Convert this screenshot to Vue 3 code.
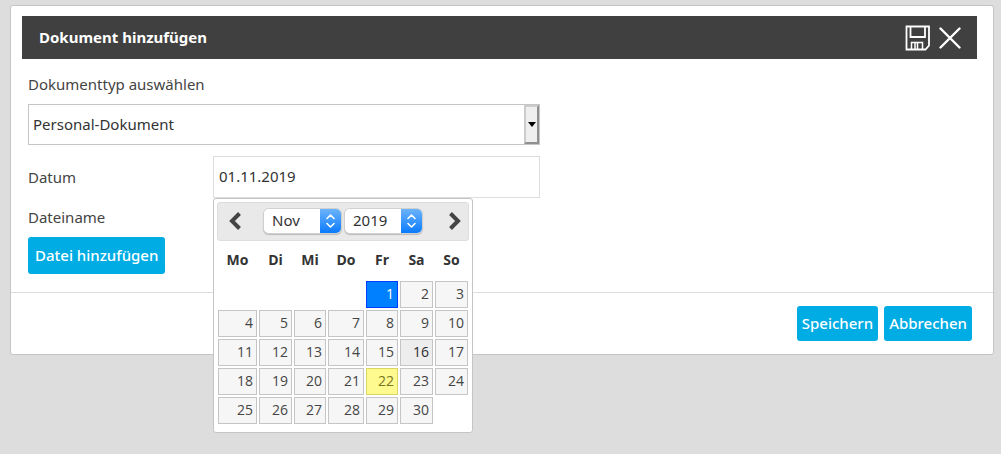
<template>
  <div class="page">
    <div class="panel">
      <header class="panel-head">
        <h1>Dokument hinzufügen</h1>
        <div class="head-actions">
          <button type="button" class="icon-btn" aria-label="Speichern">
            <svg width="26" height="26" viewBox="0 0 26 26" fill="none" stroke="#fff">
              <path d="M1.5 1.5H24V20.5L20.5 24.5H1.5Z" stroke-width="1.8" />
              <path d="M5.5 1.5V12H20V1.5" stroke-width="1.8" />
              <path d="M6.5 24.5V17.5H17.5V24.5M10 17.5V24.5M12.5 17.5V24.5" stroke-width="1.5" />
            </svg>
          </button>
          <button type="button" class="icon-btn" aria-label="Schließen">
            <svg width="22" height="22" viewBox="0 0 22 22" fill="none" stroke="#fff" stroke-width="2.4" stroke-linecap="round">
              <path d="M1.5 1.5L20.5 20.5M20.5 1.5L1.5 20.5" />
            </svg>
          </button>
        </div>
      </header>

      <form class="form" @submit.prevent>
        <label class="label-top" for="doctype">Dokumenttyp auswählen</label>
        <div class="type-select">
          <select id="doctype" v-model="docType">
            <option>Personal-Dokument</option>
          </select>
          <span class="type-arrow"><i></i></span>
        </div>

        <div class="row">
          <label for="date">Datum</label>
          <div class="date-field">
            <input id="date" v-model="date" type="text" />

            <div class="calendar">
              <div class="cal-head">
                <button type="button" class="nav-btn" aria-label="Zurück">
                  <svg width="12" height="18" viewBox="0 0 12 18" fill="none" stroke="#444" stroke-width="4">
                    <path d="M10.5 1.5L3 9L10.5 16.5" />
                  </svg>
                </button>
                <div class="cal-selects">
                  <div class="mac-select">
                    <select v-model="month" aria-label="Monat">
                      <option v-for="m in months" :key="m">{{ m }}</option>
                    </select>
                    <span class="mac-arrow">
                      <svg width="11" height="16" viewBox="0 0 11 16" fill="none" stroke="#fff" stroke-width="1.6" stroke-linecap="round" stroke-linejoin="round">
                        <path d="M2 5.5L5.5 2L9 5.5M2 10.5L5.5 14L9 10.5" />
                      </svg>
                    </span>
                  </div>
                  <div class="mac-select">
                    <select v-model="year" aria-label="Jahr">
                      <option v-for="y in years" :key="y">{{ y }}</option>
                    </select>
                    <span class="mac-arrow">
                      <svg width="11" height="16" viewBox="0 0 11 16" fill="none" stroke="#fff" stroke-width="1.6" stroke-linecap="round" stroke-linejoin="round">
                        <path d="M2 5.5L5.5 2L9 5.5M2 10.5L5.5 14L9 10.5" />
                      </svg>
                    </span>
                  </div>
                </div>
                <button type="button" class="nav-btn" aria-label="Vor">
                  <svg width="12" height="18" viewBox="0 0 12 18" fill="none" stroke="#444" stroke-width="4">
                    <path d="M1.5 1.5L9 9L1.5 16.5" />
                  </svg>
                </button>
              </div>

              <table>
                <colgroup>
                  <col class="c-mo" /><col class="c-di" /><col class="c-mi" /><col class="c-do" />
                  <col class="c-fr" /><col class="c-sa" /><col class="c-so" />
                </colgroup>
                <thead>
                  <tr>
                    <th v-for="d in weekdays" :key="d" scope="col">{{ d }}</th>
                  </tr>
                </thead>
                <tbody>
                  <tr v-for="(week, i) in weeks" :key="i">
                    <td v-for="(day, j) in week" :key="j">
                      <a
                        v-if="day"
                        href="#"
                        :class="{ selected: day === 1, today: day === 22, hover: day === 16 }"
                        @click.prevent="pick(day)"
                      >{{ day }}</a>
                    </td>
                  </tr>
                </tbody>
              </table>
            </div>
          </div>
        </div>

        <div class="file-label">Dateiname</div>
        <button type="button" class="btn btn-file">Datei hinzufügen</button>
      </form>

      <footer class="panel-foot">
        <button type="button" class="btn">Speichern</button>
        <button type="button" class="btn">Abbrechen</button>
      </footer>
    </div>
  </div>
</template>

<script setup>
import { ref } from 'vue'

const docType = ref('Personal-Dokument')
const date = ref('01.11.2019')
const month = ref('Nov')
const year = ref('2019')

const months = ['Jan', 'Feb', 'Mär', 'Apr', 'Mai', 'Jun', 'Jul', 'Aug', 'Sep', 'Okt', 'Nov', 'Dez']
const years = ['2018', '2019', '2020']
const weekdays = ['Mo', 'Di', 'Mi', 'Do', 'Fr', 'Sa', 'So']

// November 2019 beginnt an einem Freitag
const weeks = Array.from({ length: 5 }, (_, w) =>
  Array.from({ length: 7 }, (_, d) => {
    const day = w * 7 + d - 3
    return day >= 1 && day <= 30 ? day : null
  })
)

const pick = (day) => {
  date.value = `${String(day).padStart(2, '0')}.11.2019`
}
</script>

<style>
body {
  background: #ddd;
}
</style>

<style scoped>
.page {
  min-height: 100vh;
  box-sizing: border-box;
  padding: 5px 7px 20px 10px;
  background: #ddd;
}

.panel {
  background: #fff;
  border: 1px solid #c5c5c5;
  border-radius: 3px;
  font-family: "Noto Sans", "Open Sans", sans-serif;
  font-size: 15px;
  line-height: 20px;
  color: #444;
}

button,
input,
select {
  font: inherit;
  margin: 0;
  box-sizing: border-box;
}

.panel-head {
  display: flex;
  align-items: center;
  justify-content: space-between;
  height: 43px;
  margin: 10px 16px 0 11px;
  padding: 0 16px 0 17px;
  background: #404040;
  color: #fff;
}

.panel-head h1 {
  margin: 0;
  padding-bottom: 2px;
  font-size: 15px;
  font-weight: 700;
}

.head-actions {
  display: flex;
  align-items: center;
  gap: 8px;
}

.icon-btn,
.nav-btn {
  display: flex;
  padding: 0;
  border: 0;
  background: none;
}

.form {
  max-width: 512px;
  padding: 15px 17px 18px;
}

.label-top {
  display: block;
  margin-bottom: 10px;
}

.type-select {
  display: flex;
  height: 41px;
  box-sizing: border-box;
  border: 1px solid #c5c5c5;
}

.type-select select {
  flex: 1;
  padding: 0 4px 2px;
  border: 0;
  appearance: none;
  background: #fff;
  color: #333;
}

.type-arrow {
  display: flex;
  align-items: center;
  justify-content: center;
  width: 15px;
  box-sizing: border-box;
  background: #efefef;
  border: 2px solid;
  border-color: #ccc #909090 #909090 #ccc;
}

.type-arrow i {
  border: 4px solid transparent;
  border-top: 5px solid #000;
  border-bottom: 0;
}

.row {
  display: flex;
  align-items: center;
  margin-top: 11px;
}

.row > label {
  width: 185px;
}

.date-field {
  position: relative;
  flex: 1;
}

.date-field input {
  display: block;
  width: 100%;
  height: 42px;
  padding: 0 5px 2px;
  border: 1px solid #ddd;
  color: #333;
}

.file-label {
  margin: 9px 0 10px;
}

.btn {
  height: 35px;
  padding: 0 5px 2px;
  border: 0;
  border-radius: 3px;
  background: #00ace4;
  color: #fff;
  font-weight: 500;
}

.btn-file {
  display: block;
  height: 37px;
  padding: 0 7px 2px;
}

.panel-foot {
  display: flex;
  justify-content: flex-end;
  gap: 6px;
  padding: 13px 21px 13px 20px;
  border-top: 1px solid #ddd;
}

.calendar {
  position: absolute;
  top: 100%;
  left: 0;
  z-index: 1;
  padding: 3px 3px 7px;
  background: #fff;
  border: 1px solid #c5c5c5;
  border-radius: 3px;
}

.cal-head {
  display: flex;
  align-items: center;
  justify-content: space-between;
  height: 39px;
  box-sizing: border-box;
  padding: 0 7px 2px 11px;
  background: #e9e9e9;
  border: 1px solid #ddd;
  border-radius: 3px;
}

.cal-selects {
  display: flex;
  gap: 4px;
  margin-right: 4px;
}

.mac-select {
  display: flex;
  height: 24px;
  box-sizing: border-box;
  border-radius: 5px;
  overflow: hidden;
  background: #fff;
  box-shadow: 0 0 0 1px #d0d0d0, 0 1px 1px 1px #bbb;
}

.mac-select select {
  width: 56px;
  padding: 0 0 2px 8px;
  border: 0;
  appearance: none;
  background: #fff;
  color: #333;
}

.mac-arrow {
  display: flex;
  align-items: center;
  justify-content: center;
  width: 21px;
  background: linear-gradient(#6cb3fa, #0a7bff);
}

table {
  width: 252px;
  margin-top: 1px;
  table-layout: fixed;
  border-collapse: collapse;
  font-family: "Open Sans", "Noto Sans", sans-serif;
  font-size: 14px;
}

.c-mo {
  width: 41px;
}

.c-di,
.c-sa,
.c-so {
  width: 35px;
}

.c-mi,
.c-fr {
  width: 34px;
}

.c-do {
  width: 38px;
}

th {
  height: 35px;
  padding: 0 0 3px;
  font-size: 14px;
  font-weight: 700;
  color: #333;
}

td {
  padding: 1px;
}

td a {
  display: block;
  padding: 2px 3px 3px;
  border: 1px solid #c5c5c5;
  background: #f6f6f6;
  color: #454545;
  text-align: right;
  text-decoration: none;
}

td a.hover {
  background: #ededed;
  color: #2b2b2b;
}

td a.selected {
  background: #007fff;
  border-color: #003eff;
  color: #fff;
}

td a.today {
  background: #fffa90;
  border-color: #dad55e;
  color: #777620;
}
</style>
